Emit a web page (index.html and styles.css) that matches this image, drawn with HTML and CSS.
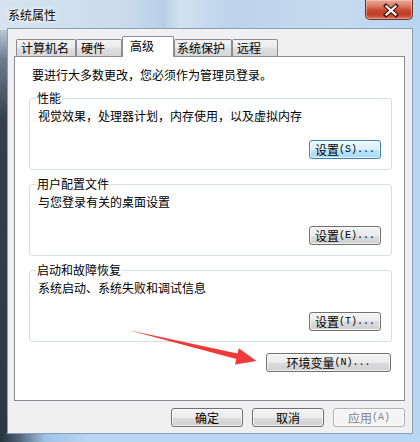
FILE: index.html
```html
<!DOCTYPE html>
<html lang="zh-CN">
<head>
<meta charset="utf-8">
<title>系统属性</title>
<link rel="stylesheet" href="styles.css">
</head>
<body>
<div class="window">
  <div class="titlebar">
    <span class="title">系统属性</span>
    <div class="close">
      <svg width="46" height="19" viewBox="0 0 46 19">
        <path d="M20 6 L30 15 M30 6 L20 15" stroke="#3a1610" stroke-width="4.2" stroke-linecap="square" fill="none"/>
        <path d="M20.5 6.5 L29.5 14.5 M29.5 6.5 L20.5 14.5" stroke="#ffffff" stroke-width="2.2" stroke-linecap="square" fill="none"/>
      </svg>
    </div>
  </div>
  <div class="dialog">
    <div class="tabs">
      <div class="tab tab-name">计算机名</div>
      <div class="tab tab-hw">硬件</div>
      <div class="tab tab-adv active">高级</div>
      <div class="tab tab-prot">系统保护</div>
      <div class="tab tab-remote">远程</div>
    </div>
    <div class="panel">
      <p class="intro">要进行大多数更改，您必须作为管理员登录。</p>
      <div class="group">
        <span class="legend">性能</span>
        <p class="desc">视觉效果，处理器计划，内存使用，以及虚拟内存</p>
        <div class="actions"><button class="btn hot">设置<span class="acc">(S)...</span></button></div>
      </div>
      <div class="group">
        <span class="legend">用户配置文件</span>
        <p class="desc">与您登录有关的桌面设置</p>
        <div class="actions"><button class="btn">设置<span class="acc">(E)...</span></button></div>
      </div>
      <div class="group">
        <span class="legend">启动和故障恢复</span>
        <p class="desc">系统启动、系统失败和调试信息</p>
        <div class="actions"><button class="btn">设置<span class="acc">(T)...</span></button></div>
      </div>
      <div class="env-row"><button class="btn wide">环境变量<span class="acc">(N)...</span></button></div>
    </div>
    <div class="footer">
      <button class="btn">确定</button>
      <button class="btn">取消</button>
      <button class="btn disabled">应用<span class="acc">(A)</span></button>
    </div>
  </div>
  <svg class="arrow" width="420" height="442" viewBox="0 0 420 442">
    <polygon points="128,330 237.5,353.6 238.8,348.3 256.5,361 235,364.4 236.3,358.9" fill="#f03a3a"/>
  </svg>
</div>
</body>
</html>
```
FILE: styles.css
```css
html, body {
  margin: 0;
  padding: 0;
}
body {
  font-family: "Noto Sans CJK SC", "Liberation Sans", sans-serif;
  font-size: 12px;
  color: #000;
}
.window {
  position: relative;
  width: 420px;
  height: 442px;
  box-sizing: border-box;
  padding: 0 7px 8px 7px;
  display: flex;
  flex-direction: column;
  overflow: hidden;
  background:
    linear-gradient(to right, #27333f 0px, #4d6072 18px, #9fc2e4 45px, #b8d7f4 90px, #b9d8f5 100%) left bottom / 100% 9px no-repeat,
    linear-gradient(#b9c8d6 0px, #6a7c8e 30px, #33404c 90px, #2c3844 100%) 0 30px / 7px 404px no-repeat,
    linear-gradient(to right, #d6e3ef 0%, #cbdbeb 30%, #b6cfe8 39%, #d2e1ef 43%, #bcd3ea 55%, #c5daee 80%, #b7d6f3 100%);
}
.titlebar {
  height: 28px;
  display: flex;
  align-items: flex-start;
}
.title {
  margin-top: 8px;
  margin-left: 1px;
  line-height: 14px;
  text-shadow: 0 0 6px #ffffff, 0 0 3px #ffffff, 0 0 2px #ffffff;
}
.close {
  margin-left: auto;
  width: 48px;
  height: 20px;
  box-sizing: border-box;
  border: 1px solid #6b3026;
  border-top: none;
  border-radius: 0 0 5px 5px;
  background: linear-gradient(#e9a898 0%, #dd7e68 30%, #c8472d 55%, #c23b20 75%, #d8715a 100%);
  box-shadow: inset 0 0 0 1px rgba(255, 220, 210, 0.45);
}
.close svg {
  display: block;
}
.dialog {
  height: 406px;
  box-sizing: border-box;
  border: 1px solid #8a9fb6;
  background: #f0f0f0;
  display: flex;
  flex-direction: column;
}
.tabs {
  display: flex;
  align-items: flex-end;
  margin: 7px 0 0 8px;
  height: 20px;
}
.tab {
  box-sizing: border-box;
  height: 17px;
  border: 1px solid #898c95;
  border-bottom: none;
  border-radius: 2px 2px 0 0;
  padding-left: 4px;
  line-height: 16px;
  white-space: nowrap;
  background: linear-gradient(#f3f3f3 0%, #ebebeb 45%, #dedede 55%, #d6d6d6 100%);
}
.tab-name { width: 60px; }
.tab-hw { width: 46px; }
.tab-adv { width: 52px; padding-left: 7px; }
.tab-prot { width: 58px; padding-left: 2px; }
.tab-remote { width: 46px; }
.tab.active {
  position: relative;
  z-index: 1;
  height: 21px;
  margin-bottom: -1px;
  line-height: 18px;
  background: #ffffff;
}
.panel {
  margin-left: 6px;
  width: 391px;
  height: 345px;
  box-sizing: border-box;
  border: 1px solid #898c95;
  background: #ffffff;
  display: flex;
  flex-direction: column;
}
.intro {
  margin: 11px 0 0 17px;
  line-height: 14px;
}
.group {
  margin: 16px 12px 0 14px;
  border: 1px solid #d5dfe5;
  border-radius: 3px;
  padding: 0 10px 10px 0;
  display: flex;
  flex-direction: column;
}
.group + .group {
  margin-top: 14px;
}
.legend {
  align-self: flex-start;
  margin: -8px 0 0 6px;
  padding: 0 1px;
  background: #ffffff;
  line-height: 14px;
}
.desc {
  margin: 4px 0 0 8px;
  line-height: 14px;
}
.actions {
  display: flex;
  justify-content: flex-end;
  margin-top: 17px;
}
.env-row {
  display: flex;
  justify-content: flex-end;
  margin: 11px 13px 0 0;
}
.footer {
  display: flex;
  justify-content: flex-end;
  gap: 9px;
  margin-top: 7px;
  padding-right: 7px;
}
.btn {
  box-sizing: border-box;
  width: 72px;
  height: 19px;
  margin: 0;
  padding: 0;
  border: 1px solid #707070;
  border-radius: 3px;
  background: linear-gradient(#f2f2f2 0%, #ebebeb 50%, #dddddd 50%, #cfcfcf 100%);
  box-shadow: inset 0 0 0 1px rgba(255, 255, 255, 0.7);
  font-family: "Noto Sans CJK SC", "Liberation Sans", sans-serif;
  font-size: 12px;
  line-height: 14px;
  color: #000;
  display: flex;
  align-items: center;
  justify-content: center;
}
.btn.wide {
  width: 125px;
}
.btn.hot {
  border-color: #3c7fb1;
  background: linear-gradient(#eaf6fd 0%, #d9f0fc 50%, #bee6fd 50%, #a7d9f5 100%);
}
.btn.disabled {
  border-color: #adb2b5;
  background: #f4f4f4;
  color: #838383;
}
.acc {
  font-family: "Liberation Mono", monospace;
  font-size: 10px;
  letter-spacing: 0;
}
.arrow {
  position: absolute;
  left: 0;
  top: 0;
  pointer-events: none;
}
```
